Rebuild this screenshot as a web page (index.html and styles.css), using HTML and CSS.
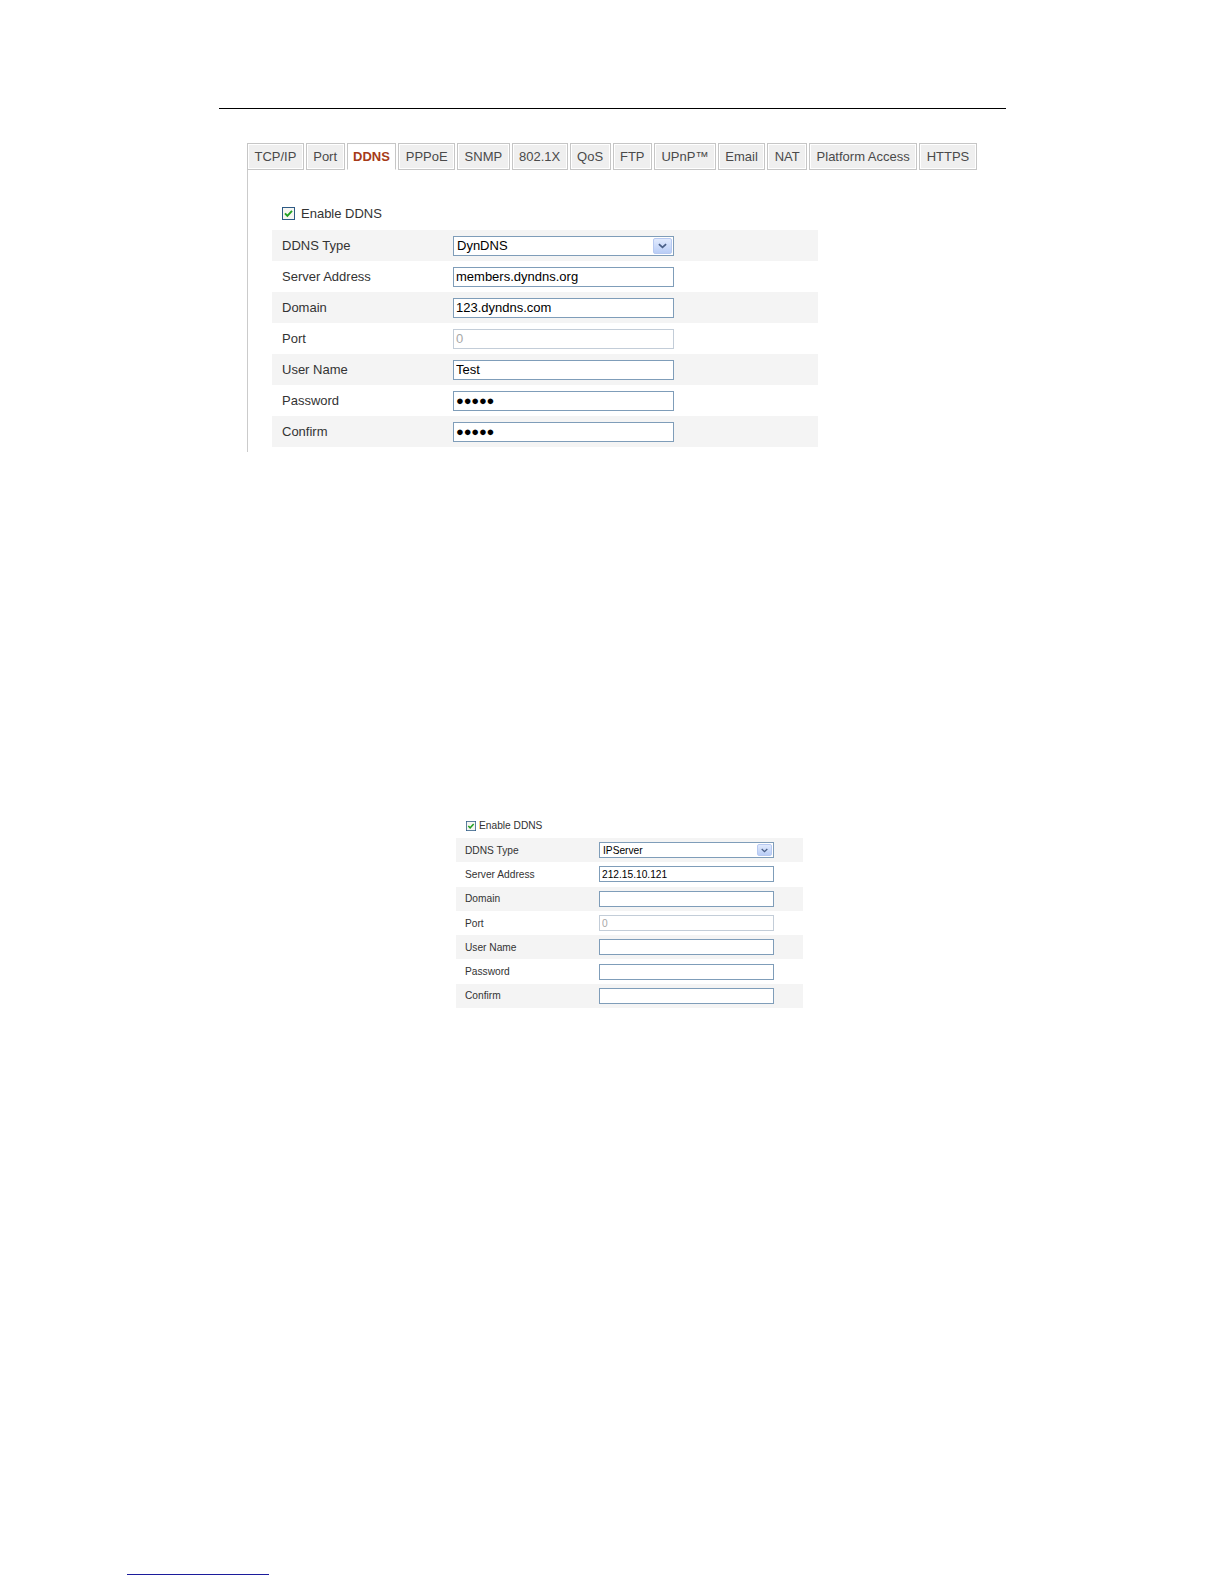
FILE: index.html
```html
<!DOCTYPE html>
<html lang="en">
  <head>
    <meta charset="UTF-8" />
    <meta name="viewport" content="width=device-width, initial-scale=1.0" />
    <title>DDNS Settings</title>
    <link rel="stylesheet" href="styles.css">
  </head>

  <body>
    <div class="header-rule"></div>

    <!--Captura 1: pestaña DDNS con DynDNS-->
    <div class="shot-large">
      <ul class="tabs">
        <li class="tab">TCP/IP</li>
        <li class="tab">Port</li>
        <li class="tab active">DDNS</li>
        <li class="tab">PPPoE</li>
        <li class="tab">SNMP</li>
        <li class="tab">802.1X</li>
        <li class="tab">QoS</li>
        <li class="tab">FTP</li>
        <li class="tab">UPnP™</li>
        <li class="tab">Email</li>
        <li class="tab">NAT</li>
        <li class="tab">Platform Access</li>
        <li class="tab">HTTPS</li>
      </ul>

      <div class="panel">
        <label class="enable">
          <svg class="check" viewBox="0 0 13 13">
            <rect x="0.5" y="0.5" width="12" height="12" fill="#f6f6f2" stroke="#2d5a85" />
            <path d="M3 6.4 L5.4 8.9 L10 3.9" fill="none" stroke="#22a022" stroke-width="1.9" />
          </svg>
          Enable DDNS
        </label>

        <div class="rows">
          <div class="row">
            <span class="label">DDNS Type</span>
            <div class="select">
              <span class="select-text">DynDNS</span>
              <span class="arrow">
                <svg viewBox="0 0 10 6"><path d="M1 1 L5 4.6 L9 1" fill="none" stroke="#4a5f87" stroke-width="1.9" /></svg>
              </span>
            </div>
          </div>
          <div class="row">
            <span class="label">Server Address</span>
            <input type="text" value="members.dyndns.org" />
          </div>
          <div class="row">
            <span class="label">Domain</span>
            <input type="text" value="123.dyndns.com" />
          </div>
          <div class="row">
            <span class="label">Port</span>
            <input type="text" value="0" disabled />
          </div>
          <div class="row">
            <span class="label">User Name</span>
            <input type="text" value="Test" />
          </div>
          <div class="row">
            <span class="label">Password</span>
            <input class="masked" type="text" value="●●●●●" />
          </div>
          <div class="row">
            <span class="label">Confirm</span>
            <input class="masked" type="text" value="●●●●●" />
          </div>
        </div>
      </div>
    </div>

    <!--Captura 2: IPServer-->
    <div class="shot-small">
      <label class="enable">
        <svg class="check" viewBox="0 0 13 13">
          <rect x="0.5" y="0.5" width="12" height="12" fill="#f6f6f2" stroke="#2d5a85" />
          <path d="M3 6.4 L5.4 8.9 L10 3.9" fill="none" stroke="#22a022" stroke-width="1.9" />
        </svg>
        Enable DDNS
      </label>

      <div class="rows">
        <div class="row">
          <span class="label">DDNS Type</span>
          <div class="select">
            <span class="select-text">IPServer</span>
            <span class="arrow">
              <svg viewBox="0 0 10 6"><path d="M1 1 L5 4.6 L9 1" fill="none" stroke="#4a5f87" stroke-width="1.9" /></svg>
            </span>
          </div>
        </div>
        <div class="row">
          <span class="label">Server Address</span>
          <input type="text" value="212.15.10.121" />
        </div>
        <div class="row">
          <span class="label">Domain</span>
          <input type="text" value="" />
        </div>
        <div class="row">
          <span class="label">Port</span>
          <input type="text" value="0" disabled />
        </div>
        <div class="row">
          <span class="label">User Name</span>
          <input type="text" value="" />
        </div>
        <div class="row">
          <span class="label">Password</span>
          <input type="text" value="" />
        </div>
        <div class="row">
          <span class="label">Confirm</span>
          <input type="text" value="" />
        </div>
      </div>
    </div>

    <div class="footnote-rule"></div>
  </body>
</html>
```

FILE: styles.css
```css
body {
  font-family: 'Liberation Sans', Arial, sans-serif;
  margin: 0;
  padding: 0;
  background: #fff;
  color: #333;
}

.header-rule {
  width: 787px;
  margin: 108px 0 0 219px;
  border-top: 1px solid #000;
}

/* captura grande */
.shot-large {
  margin: 34px 0 0 247px;
  font-size: 13px;
}

.tabs {
  display: flex;
  align-items: flex-end;
  gap: 2px;
  margin: 0;
  padding: 0;
  list-style: none;
  height: 27px;
}

.tab {
  box-sizing: border-box;
  height: 27px;
  padding: 0 6.45px;
  border: 1px solid #c6c6c6;
  box-shadow: inset 0 0 0 1px #fff;
  background: #efefef;
  color: #4a4a4a;
  line-height: 25px;
  white-space: nowrap;
}

.tab.active {
  padding: 0 5.5px;
  background: #fff;
  border-bottom-color: #fff;
  color: #a63a18;
  font-weight: bold;
  box-shadow: none;
}

.panel {
  box-sizing: border-box;
  height: 282px;
  padding-top: 36px;
  border-left: 1px solid #cbcbcb;
}

.enable {
  display: flex;
  align-items: center;
  gap: 6px;
  height: 14px;
  margin-left: 34px;
  color: #333;
}

.check {
  width: 13px;
  height: 13px;
  flex: none;
}

.shot-large .rows {
  width: 546px;
  margin: 10px 0 0 24px;
}

.row {
  display: flex;
  align-items: center;
  height: 31px;
}

.row:nth-child(odd) {
  background: #f4f4f4;
}

.label {
  box-sizing: border-box;
  width: 181px;
  padding-left: 10px;
  color: #333;
}

input[type='text'],
.select {
  box-sizing: border-box;
  width: 221px;
  height: 20px;
  margin: 0;
  padding: 0 2px;
  border: 1px solid #7f9db9;
  border-radius: 0;
  background: #fff;
  font-family: 'Liberation Sans', Arial, sans-serif;
  font-size: 13px;
  color: #000;
  outline: none;
}

input[disabled] {
  border-color: #c3cdd8;
  color: #a8a8a8;
}

.masked {
  letter-spacing: -0.2px;
}

.select {
  display: flex;
  align-items: center;
  padding: 1px;
}

.select-text {
  flex: 1;
  padding-left: 2px;
}

.arrow {
  box-sizing: border-box;
  display: flex;
  align-items: center;
  justify-content: center;
  width: 19px;
  height: 100%;
  border: 1px solid #b7c9f1;
  border-radius: 2px;
  background: linear-gradient(#e1eafd, #b9cdf6);
}

.arrow svg {
  width: 9px;
  height: 6px;
}

/* captura pequeña */
.shot-small {
  margin: 368px 0 0 456px;
  font-size: 10.2px;
}

.shot-small .enable {
  gap: 3px;
  height: 11px;
  margin-left: 10px;
}

.shot-small .check {
  width: 10px;
  height: 10px;
}

.shot-small .rows {
  width: 347px;
  margin-top: 7px;
}

.shot-small .row {
  height: 24.3px;
}

.shot-small .label {
  width: 143px;
  padding-left: 9px;
}

.shot-small input[type='text'],
.shot-small .select {
  width: 175px;
  height: 16px;
  font-size: 10.2px;
}

.shot-small .arrow {
  width: 15px;
}

.shot-small .arrow svg {
  width: 7px;
  height: 5px;
}

.footnote-rule {
  width: 142px;
  margin: 566px 0 0 127px;
  border-top: 1px solid #1c1c9c;
}
```
